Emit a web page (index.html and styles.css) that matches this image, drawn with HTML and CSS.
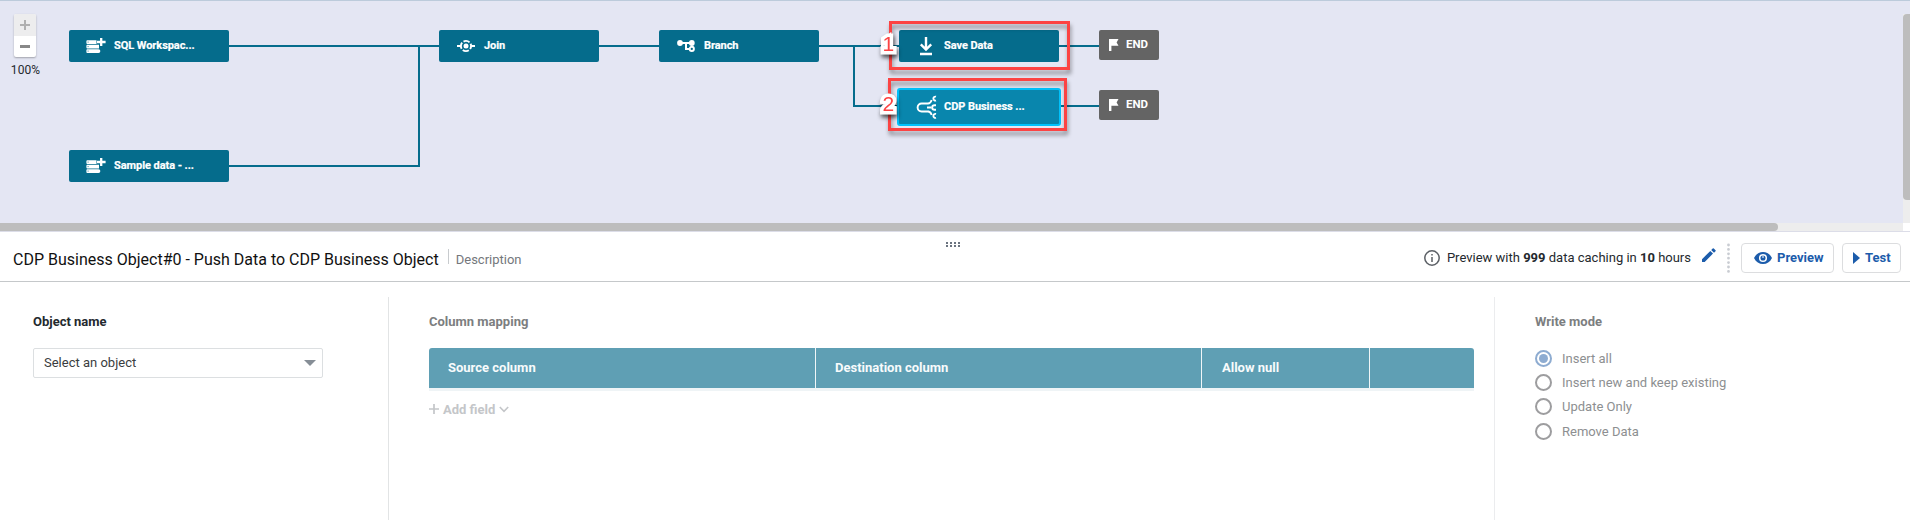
FILE: index.html
```html
<!DOCTYPE html>
<html lang="en">
<head>
<meta charset="utf-8">
<title>Workflow editor</title>
<link rel="stylesheet" href="styles.css">
</head>
<body>
<svg class="defs" width="0" height="0">
  <symbol id="source" viewBox="0 0 20 16">
    <path d="M1 2.200h9.500v3.700H1a1 1 0 0 1-.6-1V3.200a1 1 0 0 1 .6-1zM1 6.700h12v3.700H1a1 1 0 0 1-.6-1V7.700a1 1 0 0 1 .6-1zM1 11.200h11.500a1 1 0 0 1 0 3.700H1a1 1 0 0 1-.6-1v-1.700a1 1 0 0 1 .6-1z" fill="currentColor"/>
    <path d="M15.200 0v8M11 4h8.600" stroke="currentColor" stroke-width="2.300"/>
    <path d="M1.600 4.100h1M1.600 8.600h1M1.600 13.100h1" stroke="#056c8c" stroke-width=".8"/>
  </symbol>
  <symbol id="flag" viewBox="0 0 10 12"><path d="M0 0h9.500L7.600 3.400 9.500 6.800H2.400V12H0z" fill="currentColor"/></symbol>
</svg>
<main class="app">
  <section class="canvas">
    <div class="zoom">
      <div class="zoom-buttons"><span class="zoom-in"></span><span class="zoom-out"></span></div>
      <div class="zoom-level">100%</div>
    </div>
    <svg class="links" width="1200" height="200" viewBox="0 0 1200 200">
      <path d="M229 46h210M229 166h190V46M599 46h60M819 46h80M854 46v60h44M1059 46h40M1061 106h38"/>
    </svg>
    <div class="node sql"><svg width="20" height="16"><use href="#source"/></svg><span>SQL Workspac...</span></div>
    <div class="node sample"><svg width="20" height="16"><use href="#source"/></svg><span>Sample data - ...</span></div>
    <div class="node join"><svg width="20" height="14" viewBox="0 0 20 14"><circle cx="10" cy="7" r="5.100" fill="none" stroke="currentColor" stroke-width="1.900" stroke-dasharray="6.400 1.610" stroke-dashoffset="3.200"/><circle cx="10" cy="7" r="2.500" fill="currentColor"/><path d="M1 7h4M15 7h4" stroke="currentColor" stroke-width="1.800"/></svg><span>Join</span></div>
    <div class="node branch"><svg width="20" height="14" viewBox="0 0 20 14"><circle cx="4" cy="4" r="2.900" fill="currentColor"/><circle cx="15.800" cy="4" r="2.900" fill="currentColor"/><circle cx="15.800" cy="9.900" r="2.100" fill="none" stroke="currentColor" stroke-width="1.900"/><path d="M4 4h12M10 4v6h4" fill="none" stroke="currentColor" stroke-width="2"/></svg><span>Branch</span></div>
    <div class="node save"><svg width="20" height="20" viewBox="0 0 20 20"><path d="M10 1v12M4.800 8.300L10 13.500l5.200-5.200M4 18h12" fill="none" stroke="currentColor" stroke-width="2.400"/></svg><span>Save Data</span></div>
    <div class="node cdp"><svg width="22" height="24" viewBox="0 0 22 24"><g fill="none" stroke="currentColor" stroke-width="1.900"><path d="M13 8.500H5.600a4 4 0 0 0 0 8H13M12 8.500q2.500 0 3.700-3.500M12 16.500q2.500 0 3.700 3.500M11 12.500h4.500"/><path d="M20 1.700a2 2 0 1 0 0 3.800M20 10.200h-1.500a2.300 2.300 0 0 0 0 4.600H20M20 19a2 2 0 1 0 0 3.800"/></g></svg><span>CDP Business ...</span></div>
    <div class="end end-a"><svg width="10" height="12"><use href="#flag"/></svg><span>END</span></div>
    <div class="end end-b"><svg width="10" height="12"><use href="#flag"/></svg><span>END</span></div>
    <div class="mark mark-a"></div>
    <div class="mark mark-b"></div>
    <span class="digit digit-a">1</span>
    <span class="digit digit-b">2</span>
    <div class="vscroll"><i></i></div>
    <div class="hscroll"><i></i></div>
  </section>
  <section class="panel">
    <header class="panel-head">
      <h1>CDP Business Object#0 - Push Data to CDP Business Object</h1>
      <span class="desc">Description</span>
      <svg class="grip" width="14" height="6" viewBox="0 0 14 6"><path d="M0 1h14M0 4h14" stroke="#6b7480" stroke-width="2" stroke-dasharray="2 2"/></svg>
      <div class="tools">
        <svg class="info" width="16" height="16" viewBox="0 0 16 16"><circle cx="8" cy="8" r="7.200" fill="none" stroke="#5c6066" stroke-width="1.500"/><path d="M8 4v1.600M8 7v5" stroke="#5c6066" stroke-width="1.500"/></svg>
        <span class="caching">Preview with <b>999</b> data caching in <b>10</b> hours</span>
        <svg class="pencil" width="14" height="14" viewBox="0 0 14 14"><path d="M0 11.200L8.300 2.900l2.700 2.700L2.700 13.900H0zM9.200 2l1.500-1.500a.8.8 0 0 1 1.100 0l1.700 1.700a.8.8 0 0 1 0 1.100L12 4.800z" fill="#1c5cab"/></svg>
        <svg class="dots" width="3" height="30" viewBox="0 0 3 30"><path d="M1.500 2v28" stroke="#c9ccd2" stroke-width="2.800" stroke-linecap="round" stroke-dasharray="0 4.400"/></svg>
        <button class="btn preview"><svg width="18" height="12" viewBox="0 0 18 12"><path d="M0 6C2 2 5.200 0 9 0s7 2 9 6c-2 4-5.200 6-9 6S2 10 0 6z" fill="currentColor"/><circle cx="9" cy="6" r="3.300" fill="none" stroke="#fff" stroke-width="1.500"/><path d="M9 6V3.500" stroke="#fff" stroke-width="1"/></svg><span>Preview</span></button>
        <button class="btn test"><svg width="7" height="12" viewBox="0 0 7 12"><path d="M0 0l7 6-7 6z" fill="currentColor"/></svg><span>Test</span></button>
      </div>
    </header>
    <div class="panel-body">
      <div class="col object">
        <h2>Object name</h2>
        <div class="select"><span>Select an object</span><i></i></div>
      </div>
      <div class="col mapping">
        <h2>Column mapping</h2>
        <div class="thead"><span>Source column</span><span>Destination column</span><span>Allow null</span><span></span></div>
        <div class="add"><svg width="10" height="10" viewBox="0 0 10 10"><path d="M5 0v10M0 5h10" stroke="currentColor" stroke-width="1.700"/></svg><span>Add field</span><svg width="10" height="7" viewBox="0 0 10 7"><path d="M.8 1L5 5.300 9.200 1" fill="none" stroke="currentColor" stroke-width="1.600"/></svg></div>
      </div>
      <div class="col mode">
        <h2>Write mode</h2>
        <div class="radio on"><i></i><span>Insert all</span></div>
        <div class="radio"><i></i><span>Insert new and keep existing</span></div>
        <div class="radio"><i></i><span>Update Only</span></div>
        <div class="radio"><i></i><span>Remove Data</span></div>
      </div>
    </div>
  </section>
</main>
</body>
</html>
```
FILE: styles.css
```css
* { box-sizing: border-box; }
body { margin: 0; background: #fff; font-family: Roboto, sans-serif; font-size: 13px; color: #24292e; }
svg { display: block; flex: none; }
h1, h2 { margin: 0; }
span { white-space: nowrap; }
.defs { position: absolute; }
.app { width: 1910px; height: 520px; overflow: hidden; display: flex; flex-direction: column; }

.canvas { position: relative; height: 231px; flex: none; background: #e4e6f3; border-top: 1px solid #bccbdb; }
.canvas > * { margin-top: -1px; }
.zoom { position: absolute; left: 0; top: 14px; width: 50px; display: flex; flex-direction: column; align-items: center; }
.zoom-buttons { width: 22px; height: 43px; background: #fff; border-radius: 2px; box-shadow: 0 1px 2px rgba(0,0,0,.3); display: flex; flex-direction: column; }
.zoom-buttons span { flex: 1; display: grid; place-items: center; color: #b0b0b0; }
.zoom-in { background: #ededee; border-radius: 2px 2px 0 0; }
.zoom-buttons span::before, .zoom-in::after { content: ""; grid-area: 1/1; width: 10px; height: 2px; background: #b0b0b0; }
.zoom-buttons .zoom-out::before { height: 3px; background: #888; }
.zoom-in::after { transform: rotate(90deg); }
.zoom-level { margin-top: 5px; padding-left: 1px; line-height: 16px; font-size: 12px; letter-spacing: .1px; }
.links { position: absolute; left: 0; top: 0; fill: none; stroke: #056c8c; stroke-width: 2; }
.node { position: absolute; width: 160px; height: 32px; padding-left: 17px; border-radius: 2px; background: #056c8c; color: #fff; display: flex; align-items: center; font-size: 11px; font-weight: 700; letter-spacing: -.06px; }
.node span { margin-left: 8px; padding-bottom: 2px; -webkit-text-stroke: .2px #fff; }
.sql { left: 69px; top: 30px; }
.sample { left: 69px; top: 150px; }
.join { left: 439px; top: 30px; }
.branch { left: 659px; top: 30px; }
.save { left: 899px; top: 30px; }
.cdp { left: 897px; top: 88px; width: 164px; height: 38px; border: 2px solid #00c1fb; border-radius: 3px; background: #0986ad; }
.cdp span { margin-left: 6px; }
.end { position: absolute; left: 1099px; width: 60px; height: 30px; padding-left: 10px; border-radius: 2px; background: #646464; color: #fff; display: flex; align-items: center; gap: 7px; font-size: 11.5px; font-weight: 700; }
.end span { padding-bottom: 2px; }
.end-a { top: 30px; }
.end-b { top: 90px; }
.mark { position: absolute; border: 3px solid #fc4343; filter: drop-shadow(1px 4px 2px rgba(0,0,0,.4)); }
.mark-a { left: 889px; top: 21px; width: 181px; height: 49px; }
.mark-b { left: 888px; top: 78px; width: 179px; height: 53px; }
.digit { position: absolute; left: 882.5px; font: 21px/22px "Liberation Sans", sans-serif; color: #fc4343; -webkit-text-stroke: 7px #fff; paint-order: stroke fill; stroke-linejoin: round; filter: drop-shadow(1px 3px 2px rgba(0,0,0,.65)); }
.digit-a { top: 33px; }
.digit-b { top: 93px; }
.vscroll { position: absolute; right: 0; top: 14px; width: 7px; height: 209px; background: #ededed; }
.vscroll i { display: block; height: 186px; border-radius: 4px 0 0 4px; background: #bdbdbd; }
.hscroll { position: absolute; left: 0; top: 223px; width: 1910px; height: 8px; background: linear-gradient(90deg, #ededed 1903px, #fff 1903px); }
.hscroll i { display: block; width: 1778px; height: 8px; border-radius: 0 4px 4px 0; background: #bdbdbd; }

.panel { flex: 1; display: flex; flex-direction: column; background: #fff; border-top: 1px solid #dcdde8; }
.panel-head { position: relative; height: 50px; flex: none; padding: 2px 9px 0 13px; border-bottom: 1px solid #c5c8ca; display: flex; align-items: center; }
.panel-head h1 { font-size: 16px; line-height: 20px; font-weight: 400; color: #111; white-space: nowrap; padding-top: 5px; }
.desc { margin-left: 9px; padding-left: 8px; line-height: 15px; color: #74777c; position: relative; padding-top: 4px; }
.desc::before { content: ""; position: absolute; left: 0; top: 1px; height: 15px; width: 1px; background: #c8cbce; }
.grip { position: absolute; left: 946px; top: 10px; }
.tools { margin-left: auto; display: flex; align-items: center; }
.caching { margin-left: 7px; margin-right: 11px; }
.pencil { margin-bottom: 5px; }
.dots { margin: 0 11px 0 11px; }
.btn { height: 30px; border: 1px solid #dcdddf; border-radius: 4px; background: #fff; color: #1c5cab; font: 700 13px Roboto, sans-serif; display: flex; align-items: center; padding: 0; }
.preview { width: 93px; padding-left: 12px; gap: 5px; margin-right: 8px; }
.test { width: 59px; padding-left: 10px; gap: 5px; }

.panel-body { flex: 1; padding-top: 15px; display: flex; }
.col { padding-top: 16px; }
.col h2 { font-size: 13px; line-height: 18px; font-weight: 700; color: #7c7e80; }
.object { width: 389px; padding-left: 33px; border-right: 1px solid #e2e4e5; }
.object h2 { color: #24292e; }
.select { margin-top: 17px; width: 290px; height: 30px; border: 1px solid #dcdfe1; border-radius: 2px; padding: 0 6px 0 10px; display: flex; align-items: center; justify-content: space-between; color: #3a3d40; }
.select span { padding-bottom: 2px; }
.select i { border: 6px solid transparent; border-top: 6px solid #868e96; border-bottom: 0; }
.mapping { width: 1106px; padding-left: 40px; border-right: 1px solid #ebecee; }
.mapping .thead { margin-top: 17px; width: 1045px; height: 43px; border-bottom: 3px solid #eff4f6; border-radius: 3px 3px 0 0; background: #5f9fb4; overflow: hidden; display: grid; grid-template-columns: 387px 386px 168px 1fr; }
.thead span { padding-left: 19px; line-height: 39px; font-weight: 700; color: #f8fbfc; border-right: 1px solid #f0f6f8; }
.thead span:nth-child(3) { padding-left: 20px; }
.thead span:last-child { border: 0; }
.add { margin-top: 9px; height: 18px; display: flex; align-items: center; gap: 4px; font-weight: 700; color: #c4c6c9; }
.mode { padding-left: 40px; }
.mode h2 { margin-bottom: 15px; }
.radio { height: 24.300px; display: flex; align-items: center; gap: 10px; color: #8d8f91; }
.radio i { width: 17px; height: 17px; border: 2px solid #9d9d9f; border-radius: 50%; display: grid; place-items: center; }
.on i { border-color: #8eacd1; }
.on i::after { content: ""; width: 9px; height: 9px; border-radius: 50%; background: #8eacd1; }
```
